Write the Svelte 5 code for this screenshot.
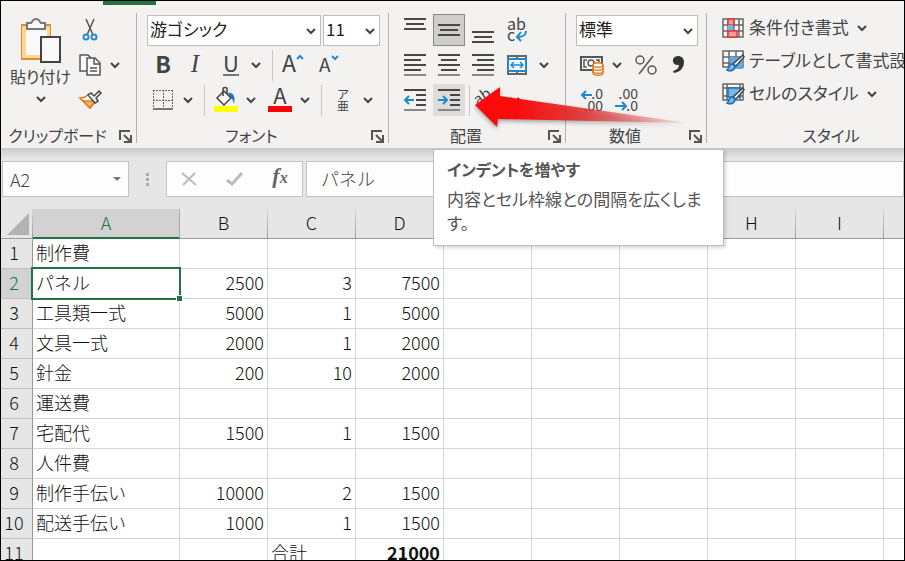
<script lang="ts">
  type Line = [x: number, y: number, width: number];

  interface Row {
    cells: string[];
    bold?: boolean;
  }

  const columns = ['A', 'B', 'C', 'D', 'E', 'F', 'G', 'H', 'I', 'J'];

  const rows: Row[] = [
    { cells: ['制作費'] },
    { cells: ['パネル', '2500', '3', '7500'] },
    { cells: ['工具類一式', '5000', '1', '5000'] },
    { cells: ['文具一式', '2000', '1', '2000'] },
    { cells: ['針金', '200', '10', '2000'] },
    { cells: ['運送費'] },
    { cells: ['宅配代', '1500', '1', '1500'] },
    { cells: ['人件費'] },
    { cells: ['制作手伝い', '10000', '2', '1500'] },
    { cells: ['配送手伝い', '1000', '1', '1500'] },
    { cells: ['', '', '合計', '21000'], bold: true },
  ];

  const alignTop: Line[] = [[0, 4, 22], [2, 9, 18], [0, 14, 22]];
  const alignMiddle: Line[] = [[0, 10, 22], [2, 15, 18], [0, 20, 22]];
  const alignBottom: Line[] = [[0, 17, 22], [2, 22, 18], [0, 27, 22]];
  const alignLeft: Line[] = [[0, 5, 22], [0, 10, 17], [0, 15, 22], [0, 20, 17], [0, 25, 22]];
  const alignCenter: Line[] = [[0, 5, 22], [3, 10, 16], [0, 15, 22], [3, 20, 16], [0, 25, 22]];
  const alignRight: Line[] = [[0, 5, 22], [5, 10, 17], [0, 15, 22], [5, 20, 17], [0, 25, 22]];
  const indent: Line[] = [[0, 5, 22], [12, 10, 10], [12, 15, 10], [12, 20, 10], [0, 25, 22]];

  let selectedCol = $state(0);
  let selectedRow = $state(1);
  let nameBox = $derived(columns[selectedCol] + (selectedRow + 1));
  let formula = $derived(rows[selectedRow].cells[selectedCol] ?? '');

  function select(row: number, col: number) {
    selectedRow = row;
    selectedCol = col;
  }

  function isNumber(value: string) {
    return value !== '' && !isNaN(Number(value));
  }
</script>

{#snippet chevron()}
  <svg class="chevron" width="10" height="6" viewBox="0 0 10 6"><path d="M1 1l4 4 4-4" /></svg>
{/snippet}

{#snippet more(label: string)}
  <button class="more" aria-label={label}>{@render chevron()}</button>
{/snippet}

{#snippet lines(list: Line[], arrow = '')}
  <svg width="22" height="32" viewBox="0 0 22 32">
    {#each list as [x, y, width], i}
      <rect {x} {y} {width} height="2" fill={i === 4 ? '#8a8886' : '#4a4846'} />
    {/each}
    {#if arrow}
      <path d={arrow} fill="none" stroke="#1e88d2" stroke-width="2" />
    {/if}
  </svg>
{/snippet}

{#snippet footer(title: string)}
  <div class="footer">
    <span>{title}</span>
    <button class="launcher" aria-label="{title}の設定">
      <svg width="13" height="13" viewBox="0 0 13 13">
        <path d="M1 10V1h10M5 5l6 6M12 5v7H5" fill="none" stroke="#555" stroke-width="2" />
      </svg>
    </button>
  </div>
{/snippet}

{#snippet brush()}
  <path d="M22 6l1 2-8 9-3-2z" fill="#fff" stroke="#444" stroke-width="1.5" />
  <path d="M6 21c4 2 8 0 8-4l-3-2c-4 0-2 4-5 6z" fill="#7ab8ea" stroke="#1a6fb8" stroke-width="1.5" />
{/snippet}

<div class="app">
  <header class="ribbon">
    <div class="tab-mark"></div>

    <section class="group clipboard">
      <div class="body clip-body">
        <button class="paste">
          <svg width="42" height="46" viewBox="0 0 42 46">
            <rect x="1" y="6" width="30" height="36" fill="#e58a2b" />
            <rect x="2" y="8" width="28" height="32" fill="#fcd794" />
            <rect x="6" y="10" width="21" height="27" fill="#fafafa" />
            <path d="M7 11V5h4c1 0 1-4 5-4s4 4 5 4h4v6z" fill="#fafafa" stroke="#777" stroke-width="2" />
            <rect x="21" y="19" width="19" height="25" fill="#fafafa" stroke="#444" stroke-width="2" />
          </svg>
          <span>貼り付け</span>
          {@render chevron()}
        </button>
        <div class="rows">
          <div class="row">
            <button class="tool" aria-label="切り取り">
              <svg width="16" height="24" viewBox="0 0 16 24">
                <path d="M4 1l7 16M12 1L5 17" fill="none" stroke="#555" stroke-width="1.5" />
                <g fill="none" stroke="#2b88d0" stroke-width="2">
                  <circle cx="4" cy="19" r="2.5" /><circle cx="12" cy="19" r="2.5" />
                </g>
              </svg>
            </button>
          </div>
          <div class="row">
            <button class="tool" aria-label="コピー">
              <svg width="24" height="24" viewBox="0 0 24 24" fill="#fafafa" stroke="#555" stroke-width="1.5">
                <path d="M10 18H2V2h8l3 3" />
                <path d="M9 5h8l5 5v12H9z" />
                <path d="M16 5v6h6M12 15h7M12 18h7" fill="none" />
              </svg>
            </button>
            {@render more('コピーのオプション')}
          </div>
          <div class="row">
            <button class="tool" aria-label="書式のコピー/貼り付け">
              <svg width="24" height="20" viewBox="0 0 24 20">
                <path d="M2 8c4 0 7-2 9-4l7 7-6 7z" fill="#fff" stroke="#e07b1c" stroke-width="1.5" />
                <path d="M5 11l12 0-5 7z" fill="#fbb45c" stroke="#e07b1c" stroke-width="1.5" />
                <path d="M10 5l3-2 3 3 5-5 2 2-5 5 2 3-3 2z" fill="#fafafa" stroke="#444" stroke-width="1.5" />
              </svg>
            </button>
          </div>
        </div>
      </div>
      {@render footer('クリップボード')}
    </section>

    <section class="group font">
      <div class="body rows">
        <div class="row fields">
          <label class="combo wide">
            <select aria-label="フォント"><option>游ゴシック</option></select>
            {@render chevron()}
          </label>
          <label class="combo size">
            <select aria-label="フォント サイズ"><option>11</option></select>
            {@render chevron()}
          </label>
        </div>
        <div class="row">
          <button class="tool strong">B</button>
          <button class="tool italic">I</button>
          <i class="space"></i>
          <button class="tool underline"><span>U</span></button>
          {@render more('下線のオプション')}
          <i class="rule"></i>
          <button class="tool" aria-label="フォント サイズの拡大">
            <svg width="26" height="26" viewBox="0 0 26 26">
              <text x="1" y="20" font-size="23" fill="#444">A</text>
              <path d="M16 7l3-3 3 3" fill="none" stroke="#2b88d0" stroke-width="2" />
            </svg>
          </button>
          <i class="space"></i>
          <button class="tool" aria-label="フォント サイズの縮小">
            <svg width="26" height="26" viewBox="0 0 26 26">
              <text x="2" y="20" font-size="19" fill="#444">A</text>
              <path d="M15 4l3 3 3-3" fill="none" stroke="#2b88d0" stroke-width="2" />
            </svg>
          </button>
        </div>
        <div class="row">
          <button class="tool" aria-label="罫線">
            <svg width="22" height="22" viewBox="0 0 22 22">
              <path d="M1 1.5h20M1 11.5h20M1.5 1v19M11.5 1v19M20.5 1v19" fill="none" stroke="#666" stroke-dasharray="2 1" />
              <rect x="1" y="19" width="20" height="2" fill="#777" />
            </svg>
          </button>
          {@render more('罫線のオプション')}
          <i class="rule"></i>
          <button class="tool" aria-label="塗りつぶしの色">
            <svg width="24" height="26" viewBox="0 0 24 26">
              <path d="M10 4l7 7-7 7-7-7z" fill="#fafafa" stroke="#444" stroke-width="1.5" />
              <path d="M9 9V2c0-2 4-2 4 0v5" fill="none" stroke="#444" stroke-width="1.5" />
              <path d="M14 6c4-1 8 2 6 11-1-3-1-5-3-6z" fill="#1f74bb" />
              <rect y="19" width="24" height="6" fill="#ff0" />
            </svg>
          </button>
          {@render more('塗りつぶしの色のオプション')}
          <i class="space"></i>
          <button class="tool" aria-label="フォントの色">
            <svg width="24" height="26" viewBox="0 0 24 26">
              <text x="12" y="17" font-size="22" fill="#444" text-anchor="middle">A</text>
              <rect y="19" width="24" height="6" fill="red" />
            </svg>
          </button>
          {@render more('フォントの色のオプション')}
          <i class="rule"></i>
          <button class="tool ruby"><span>ア</span><span>亜</span></button>
          {@render more('ふりがなのオプション')}
        </div>
      </div>
      {@render footer('フォント')}
    </section>

    <section class="group align">
      <div class="body rows">
        <div class="row tight">
          <button class="tool" aria-label="上揃え">{@render lines(alignTop)}</button>
          <button class="tool pressed" aria-label="上下中央揃え">{@render lines(alignMiddle)}</button>
          <button class="tool" aria-label="下揃え">{@render lines(alignBottom)}</button>
          <button class="tool" aria-label="折り返して全体を表示する">
            <svg width="24" height="26" viewBox="0 0 24 26">
              <text x="2" y="13" font-size="16" fill="#444">ab</text>
              <text x="2" y="24" font-size="16" fill="#444">c</text>
              <path d="M21 14c0 4-2 6-9 6M16 15l-4 5 4 4" fill="none" stroke="#1e88d2" stroke-width="2" />
            </svg>
          </button>
        </div>
        <div class="row tight">
          <button class="tool" aria-label="左揃え">{@render lines(alignLeft)}</button>
          <button class="tool" aria-label="中央揃え">{@render lines(alignCenter)}</button>
          <button class="tool" aria-label="右揃え">{@render lines(alignRight)}</button>
          <button class="tool" aria-label="セルを結合して中央揃え">
            <svg width="22" height="22" viewBox="0 0 22 22">
              <path d="M1 2h20M1 20h20M2 1v20M20 1v20M11 1v20" stroke="#666" stroke-width="2" />
              <rect x="2" y="5" width="18" height="12" fill="#fafafa" stroke="#1e88d2" stroke-width="2" />
              <path d="M5 11h12M8 8l-3 3 3 3M14 8l3 3-3 3" fill="none" stroke="#1e88d2" stroke-width="1.5" />
            </svg>
          </button>
          {@render more('結合のオプション')}
        </div>
        <div class="row tight">
          <button class="tool" aria-label="インデントを減らす">{@render lines(indent, 'M10 16H1M5 12l-4 4 4 4')}</button>
          <button class="tool hover" aria-label="インデントを増やす">{@render lines(indent, 'M0 16h9M5 12l4 4-4 4')}</button>
          <i class="rule near"></i>
          <button class="tool" aria-label="方向">
            <svg width="26" height="26" viewBox="0 0 26 26">
              <text x="1" y="15" font-size="15" fill="#444" transform="rotate(-35 8 14)">ab</text>
              <path d="M7 24L22 9M16 9h6v6" fill="none" stroke="#666" stroke-width="1.5" />
            </svg>
          </button>
          {@render more('方向のオプション')}
        </div>
      </div>
      {@render footer('配置')}
    </section>

    <section class="group number">
      <div class="body rows">
        <div class="row fields">
          <label class="combo wide">
            <select aria-label="数値の書式"><option>標準</option></select>
            {@render chevron()}
          </label>
        </div>
        <div class="row">
          <button class="tool" aria-label="通貨表示形式">
            <svg width="24" height="22" viewBox="0 0 24 22">
              <rect x="1" y="3" width="21" height="13" fill="#fafafa" stroke="#555" stroke-width="2" />
              <path d="M7 6H4v7h3M16 6h3v2" fill="none" stroke="#555" stroke-width="1.5" />
              <circle cx="11" cy="9" r="3" fill="none" stroke="#555" stroke-width="1.5" />
              <path d="M13 11v8c0 3 10 3 10 0v-8c0-3-10-3-10 0z" fill="#fff" stroke="#e07b1c" stroke-width="1.5" />
              <path d="M13 11c0 3 10 3 10 0M13 14c0 3 10 3 10 0M13 17c0 3 10 3 10 0" fill="none" stroke="#e07b1c" stroke-width="1.5" />
            </svg>
          </button>
          {@render more('通貨のオプション')}
          <i class="space"></i>
          <button class="tool" aria-label="パーセント スタイル">
            <svg width="24" height="24" viewBox="0 0 24 24" fill="none" stroke="#555" stroke-width="1.5">
              <circle cx="6" cy="7" r="4" /><circle cx="18" cy="17" r="4" /><path d="M19 3L5 21" />
            </svg>
          </button>
          <button class="tool" aria-label="桁区切りスタイル">
            <svg width="16" height="22" viewBox="0 0 16 22">
              <path d="M3 17c4-1 6-3 6-6-8 1-8-9-1-9 3 0 6 2 6 6 0 6-4 10-10 11z" fill="#333" />
            </svg>
          </button>
        </div>
        <div class="row tight">
          <button class="tool" aria-label="小数点以下の表示桁数を増やす">
            <svg width="24" height="26" viewBox="0 0 24 26" font-size="14" fill="#444">
              <text x="23" y="12" text-anchor="end">.0</text>
              <text x="23" y="24" text-anchor="end">.00</text>
              <path d="M12 8H2M6 4L2 8l4 4" fill="none" stroke="#1e88d2" stroke-width="2" />
            </svg>
          </button>
          <button class="tool" aria-label="小数点以下の表示桁数を減らす">
            <svg width="24" height="26" viewBox="0 0 24 26" font-size="14" fill="#444">
              <text x="24" y="12" text-anchor="end">.00</text>
              <text x="24" y="24" text-anchor="end">.0</text>
              <path d="M1 19h11M8 15l4 4-4 4" fill="none" stroke="#1e88d2" stroke-width="2" />
            </svg>
          </button>
        </div>
      </div>
      {@render footer('数値')}
    </section>

    <section class="group styles">
      <div class="body list">
        <button>
          <svg width="24" height="24" viewBox="0 0 24 24">
            <path d="M2 3h20v18H2zM2 9h20M2 15h20M7 3v18M13 3v18M18 3v18" fill="#fafafa" stroke="#666" stroke-width="1.5" />
            <rect x="7" y="3" width="6" height="6" fill="#ff9c96" stroke="#d93a35" stroke-width="1.5" />
            <rect x="7" y="9" width="5" height="6" fill="#6fb4ea" />
            <rect x="7" y="15" width="9" height="6" fill="#ff9c96" stroke="#d93a35" stroke-width="1.5" />
          </svg>
          <span>条件付き書式</span>{@render chevron()}
        </button>
        <button>
          <svg width="24" height="24" viewBox="0 0 24 24">
            <path d="M2 2h20v16H2zM2 8h20M2 14h20M8 2v16M15 2v16" fill="#fafafa" stroke="#666" stroke-width="1.5" />
            <rect x="9" y="8" width="13" height="12" fill="#5ea9e4" />
            {@render brush()}
          </svg>
          <span>テーブルとして書式設定</span>{@render chevron()}
        </button>
        <button>
          <svg width="24" height="24" viewBox="0 0 24 24">
            <path d="M2 2h20v16H2zM2 6h20M6 2v16M19 2v16M2 14h20" fill="#fafafa" stroke="#666" stroke-width="1.5" />
            <rect x="7" y="6" width="12" height="9" fill="#7ab8ea" stroke="#1a6fb8" stroke-width="1.5" />
            {@render brush()}
          </svg>
          <span>セルのスタイル</span>{@render chevron()}
        </button>
      </div>
      <div class="footer"><span>スタイル</span></div>
    </section>

    <svg class="pointer" width="230" height="54" viewBox="0 0 230 54">
      <defs>
        <linearGradient id="fade">
          <stop offset="0" stop-color="#ff0808" />
          <stop offset="0.2" stop-color="#fb0c0c" />
          <stop offset="0.5" stop-color="#e52a2a" stop-opacity="0.85" />
          <stop offset="1" stop-color="#f04848" stop-opacity="0.1" />
        </linearGradient>
      </defs>
      <path d="M4 24L29 6v9l188 27-190-4-1 8z" fill="url(#fade)" />
    </svg>
  </header>

  <main>
    <div class="formula-bar">
      <div class="name-box">
        <input aria-label="名前ボックス" value={nameBox} />
        <button aria-label="名前の一覧">
          <svg width="8" height="4" viewBox="0 0 8 4"><path d="M0 0h8L4 4z" fill="#777" /></svg>
        </button>
      </div>
      <div class="dots"><i></i><i></i><i></i></div>
      <div class="entry">
        <button aria-label="キャンセル">
          <svg width="16" height="14" viewBox="0 0 16 14"><path d="M1 1l14 12M14 1L2 13" stroke="#bbb" stroke-width="2" /></svg>
        </button>
        <button aria-label="入力">
          <svg width="18" height="14" viewBox="0 0 18 14"><path d="M1 8l5 4L16 1" fill="none" stroke="#bbb" stroke-width="3" /></svg>
        </button>
        <button class="fx" aria-label="関数の挿入">f<small>x</small></button>
      </div>
      <input class="formula" aria-label="数式バー" value={formula} />
    </div>

    <table>
      <thead>
        <tr>
          <th class="corner"><svg width="22" height="22" viewBox="0 0 22 22"><path d="M22 0v22H0z" fill="#b2b2b2" /></svg></th>
          {#each columns as column, c}
            <th class:first={c === 0} class:active={c === selectedCol}>{column}</th>
          {/each}
        </tr>
      </thead>
      <tbody>
        {#each rows as row, r}
          <tr>
            <th class:active={r === selectedRow}>{r + 1}</th>
            {#each columns as _, c}
              {@const value = row.cells[c] ?? ''}
              <td
                class:numeric={isNumber(value)}
                class:total={row.bold && isNumber(value)}
                class:selected={r === selectedRow && c === selectedCol}
                onclick={() => select(r, c)}
              >{value}</td>
            {/each}
          </tr>
        {/each}
      </tbody>
    </table>

    <div class="tooltip" role="tooltip">
      <strong>インデントを増やす</strong>
      <p>内容とセル枠線との間隔を広くします。</p>
    </div>
  </main>
</div>

<style>
  :global(body) {
    margin: 0;
  }

  .app {
    box-sizing: border-box;
    height: 100vh;
    overflow: hidden;
    border: 1px solid #000;
    background: #e6e6e6;
    color: #444;
    font: 18px/24px "Noto Sans CJK JP", "Noto Sans", sans-serif;
  }

  .app *,
  .app *::after {
    box-sizing: border-box;
  }

  button,
  input,
  select {
    margin: 0;
    padding: 0;
    border: 0;
    background: none;
    color: inherit;
    font: inherit;
  }

  svg {
    flex: none;
    display: block;
    overflow: visible;
  }

  .chevron {
    fill: none;
    stroke: #444;
    stroke-width: 2;
  }

  /* Ribbon */
  .ribbon {
    position: relative;
    display: flex;
    height: 147px;
    background: #f3f2f1;
    font-feature-settings: "palt";
  }

  .tab-mark {
    position: absolute;
    top: 0;
    left: 102px;
    width: 53px;
    height: 4px;
    background: #217346;
  }

  .group {
    position: relative;
    flex: none;
    display: flex;
    flex-direction: column;
    justify-content: space-between;
    padding: 13px 0 0 10px;
  }

  .group::after {
    content: "";
    position: absolute;
    top: 12px;
    right: 0;
    bottom: 5px;
    width: 1px;
    background: #b5b3b1;
  }

  .clipboard {
    width: 136px;
    padding-left: 6px;
  }

  .font {
    width: 252px;
  }

  .align {
    width: 177px;
  }

  .number {
    width: 141px;
  }

  .styles {
    width: 244px;
    padding: 10px 0 0 14px;
  }

  .styles::after {
    display: none;
  }

  .rows {
    display: flex;
    flex-direction: column;
    gap: 3px;
  }

  .row {
    display: flex;
    align-items: center;
    height: 32px;
  }

  .tight {
    gap: 2px;
  }

  .fields {
    gap: 2px;
    padding-right: 9px;
  }

  .space {
    width: 4px;
  }

  .rule {
    width: 1px;
    height: 31px;
    margin: 0 5px 0 7px;
    background: #c8c6c4;
  }

  .near {
    margin: 0 0 0 2px;
  }

  .tool {
    display: flex;
    align-items: center;
    justify-content: center;
    width: 32px;
    height: 32px;
  }

  .more {
    display: flex;
    align-items: center;
    justify-content: center;
    width: 18px;
    height: 32px;
  }

  .pressed {
    border: 1px solid #8a8886;
    background: #cfcecc;
  }

  .hover {
    background: #dddcdb;
  }

  .strong {
    padding-bottom: 5px;
    font-size: 23px;
    font-weight: 700;
  }

  .italic {
    padding-bottom: 3px;
    font: italic 25px/28px "Liberation Serif", serif;
  }

  .underline {
    font-size: 22px;
  }

  .underline span {
    width: 16px;
    height: 22px;
    border-bottom: 2px solid #777;
    line-height: 17px;
  }

  .ruby {
    flex-direction: column;
    font-size: 12px;
    line-height: 12px;
  }

  .combo {
    position: relative;
    display: flex;
    height: 31px;
    border: 1px solid #c0bebc;
    background: #fff;
    color: #222;
    font-size: 17px;
  }

  .combo select {
    appearance: none;
    width: 100%;
    padding: 0 0 2px 2px;
    font-feature-settings: "palt";
  }

  .combo .chevron {
    position: absolute;
    top: 12px;
    right: 4px;
    pointer-events: none;
  }

  .wide {
    flex: 1;
  }

  .size {
    width: 57px;
  }

  .clip-body {
    display: flex;
  }

  .paste {
    display: flex;
    flex-direction: column;
    align-items: center;
    width: 67px;
    padding-top: 4px;
    font-size: 16px;
    white-space: nowrap;
  }

  .paste .chevron {
    margin-top: 8px;
  }

  .footer {
    display: flex;
    align-items: center;
    height: 24px;
    margin-left: -10px;
    font-size: 16px;
    white-space: nowrap;
  }

  .clipboard .footer {
    margin-left: -6px;
  }

  .footer span {
    flex: 1;
    padding-bottom: 2px;
    text-align: center;
  }

  .launcher {
    width: 13px;
    margin: 0 5px;
  }

  .list {
    display: flex;
    flex-direction: column;
    align-items: flex-start;
    font-size: 17px;
  }

  .list button {
    display: flex;
    align-items: center;
    height: 33px;
    white-space: nowrap;
  }

  .list span {
    margin: 0 8px 2px 4px;
  }

  .pointer {
    position: absolute;
    top: 80px;
    left: 470px;
    pointer-events: none;
    filter: drop-shadow(0 2px 2px rgb(0 0 0 / 35%));
  }

  /* Formula bar */
  main {
    position: relative;
  }

  .formula-bar {
    display: flex;
    padding: 13px 0 12px 1px;
    background: linear-gradient(#c9c9c9, #e6e6e6 10px);
  }

  .name-box,
  .entry,
  .formula {
    height: 36px;
    border: 1px solid #c3c3c3;
    background: #fdfdfd;
  }

  .name-box {
    display: flex;
    width: 127px;
    padding-right: 7px;
    font-weight: 300;
  }

  .name-box input {
    flex: 1;
    min-width: 0;
    padding-left: 7px;
  }

  .dots {
    display: flex;
    flex-direction: column;
    justify-content: center;
    gap: 2px;
    width: 37px;
    padding-left: 17px;
  }

  .dots i {
    width: 3px;
    height: 3px;
    background: #aaa;
  }

  .entry {
    display: flex;
    justify-content: space-around;
    width: 137px;
    margin-right: 3px;
  }

  .fx {
    padding-bottom: 4px;
    color: #666;
    font: italic bold 22px/28px "Liberation Serif", serif;
  }

  .fx small {
    font-size: 16px;
  }

  .formula {
    flex: 1;
    min-width: 0;
    padding: 0 0 3px 14px;
    font-weight: 300;
  }

  /* Sheet */
  table {
    border-spacing: 0;
    background: #fff;
    color: #111;
    white-space: nowrap;
  }

  th {
    padding: 0 0 3px;
    background: #e6e6e6;
    font-weight: 300;
    font-size: 18px;
    line-height: 24px;
  }

  thead th {
    min-width: 88px;
    height: 30px;
    border-right: 1px solid;
    border-bottom: 1px solid #999;
    border-image: linear-gradient(#d8d8d8, #999) 1;
  }

  thead .first {
    min-width: 147px;
  }

  thead .corner {
    min-width: 32px;
    width: 32px;
    padding: 0 3px 0 6px;
  }

  th.active {
    background: #d2d2d2;
    color: #217346;
  }

  thead .active {
    border-image: none;
    border-right-color: #aaa;
    border-bottom: 2px solid #217346;
  }

  tbody th {
    border-right: 1px solid #999;
    border-bottom: 1px solid #c0c0c0;
    padding-right: 5px;
  }

  td {
    position: relative;
    height: 30px;
    padding: 0 3px 3px;
    border-right: 1px solid #d4d4d4;
    border-bottom: 1px solid #d4d4d4;
    font-weight: 300;
  }

  .numeric {
    text-align: right;
  }

  .total {
    font-weight: 700;
  }

  .selected::before {
    content: "";
    position: absolute;
    inset: -2px;
    border: 2px solid #217346;
  }

  .selected::after {
    content: "";
    position: absolute;
    z-index: 1;
    right: -4px;
    bottom: -4px;
    width: 7px;
    height: 7px;
    border: 1px solid #fff;
    background: #217346;
  }

  /* Tooltip */
  .tooltip {
    position: absolute;
    z-index: 2;
    top: 1px;
    left: 432px;
    width: 291px;
    padding: 7px 14px 10px 13px;
    border: 1px solid #bebebe;
    background: #fff;
    box-shadow: 2px 2px 3px rgb(0 0 0 / 15%);
    color: #555;
    font-size: 17px;
    font-feature-settings: "palt";
  }

  .tooltip strong {
    font-size: 16px;
  }

  .tooltip p {
    margin: 6px 0 0;
  }
</style>
